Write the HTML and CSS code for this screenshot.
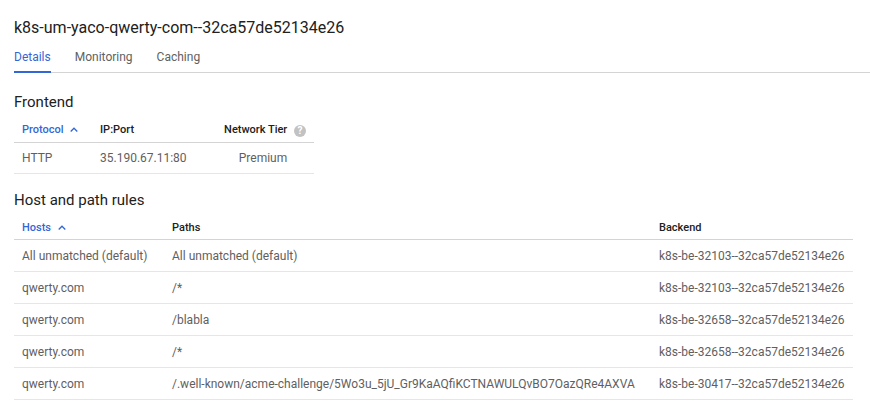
FILE: index.html
```html
<!DOCTYPE html>
<html>
<head>
<meta charset="utf-8">
<link rel="stylesheet" href="styles.css">
</head>
<body>
<div class="page">
  <h1 class="title">k8s-um-yaco-qwerty-com--32ca57de52134e26</h1>
  <nav class="tabs">
    <span class="tab active">Details</span>
    <span class="tab">Monitoring</span>
    <span class="tab">Caching</span>
  </nav>

  <h2 class="section first">Frontend</h2>
  <table class="grid frontend">
    <thead>
      <tr>
        <th class="sorted c-proto">Protocol <svg class="sort" width="8" height="5" viewBox="0 0 8 5"><path d="M0.7 4.5 L4 1.2 L7.3 4.5" fill="none" stroke="currentColor" stroke-width="1.3"/></svg></th>
        <th class="c-ip">IP:Port</th>
        <th class="c-tier">Network Tier <span class="help">?</span></th>
      </tr>
    </thead>
    <tbody>
      <tr><td>HTTP</td><td>35.190.67.11:80</td><td class="center">Premium</td></tr>
    </tbody>
  </table>

  <h2 class="section">Host and path rules</h2>
  <table class="grid hosts">
    <thead>
      <tr>
        <th class="sorted c-host">Hosts <svg class="sort" width="8" height="5" viewBox="0 0 8 5"><path d="M0.7 4.5 L4 1.2 L7.3 4.5" fill="none" stroke="currentColor" stroke-width="1.3"/></svg></th>
        <th class="c-path">Paths</th>
        <th>Backend</th>
      </tr>
    </thead>
    <tbody>
      <tr><td>All unmatched (default)</td><td>All unmatched (default)</td><td>k8s-be-32103--32ca57de52134e26</td></tr>
      <tr><td>qwerty.com</td><td>/*</td><td>k8s-be-32103--32ca57de52134e26</td></tr>
      <tr><td>qwerty.com</td><td>/blabla</td><td>k8s-be-32658--32ca57de52134e26</td></tr>
      <tr><td>qwerty.com</td><td>/*</td><td>k8s-be-32658--32ca57de52134e26</td></tr>
      <tr><td>qwerty.com</td><td>/.well-known/acme-challenge/5Wo3u_5jU_Gr9KaAQfiKCTNAWULQvBO7OazQRe4AXVA</td><td>k8s-be-30417--32ca57de52134e26</td></tr>
    </tbody>
  </table>
</div>
</body>
</html>
```

FILE: styles.css
```css
html, body {
  margin: 0;
  padding: 0;
  background: #fff;
}
body {
  font-family: Roboto, "Liberation Sans", Arial, sans-serif;
  color: #212121;
}
.page {
  padding: 0 0 0 14px;
}
.title {
  margin: 0;
  padding-top: 17px;
  font-size: 16px;
  font-weight: 400;
  line-height: 22px;
  color: #212121;
}
.tabs {
  display: flex;
  gap: 24px;
  margin-top: 10px;
  border-bottom: 1px solid #d4d4d4;
}
.tab {
  font-size: 12px;
  line-height: 16px;
  padding: 0 0 6px;
  color: #616161;
  border-bottom: 2px solid transparent;
  margin-bottom: -1px;
}
.tab.active {
  color: #3367d6;
  border-bottom-color: #3367d6;
}
.section {
  margin: 16px 0 5px;
  font-size: 15px;
  font-weight: 400;
  line-height: 20px;
  color: #212121;
}
.section.first {
  margin-top: 19px;
}
.grid {
  border-collapse: collapse;
  font-size: 12px;
}
.grid th {
  font-size: 11px;
  font-weight: 500;
  color: #212121;
  text-align: left;
  height: 25px;
  padding: 0 8px;
  border-bottom: 1px solid #d4d4d4;
  white-space: nowrap;
}
.grid th.sorted {
  color: #3367d6;
}
.sort {
  margin-left: 4px;
  vertical-align: 1px;
}
.grid td {
  height: 31px;
  padding: 0 8px;
  color: #5f5f5f;
  border-bottom: 1px solid #e6e6e6;
  white-space: nowrap;
}
.frontend {
  width: 300px;
}
.frontend td {
  height: 30px;
}
.frontend .c-proto { width: 62px; }
.frontend .c-ip { width: 108px; }
.frontend .c-tier { text-align: right; }
.grid td.center { text-align: center; padding-left: 4px; }
.help {
  display: inline-block;
  width: 12px;
  height: 12px;
  border-radius: 50%;
  background: #c2c2c2;
  color: #fff;
  font-size: 10px;
  font-weight: 700;
  line-height: 12px;
  text-align: center;
  margin-left: 4px;
  vertical-align: -1px;
}
.hosts {
  width: 839px;
  margin-bottom: 10px;
}
.hosts th {
  height: 24px;
}
.hosts .c-host { width: 134px; }
.hosts .c-path { width: 471px; }
```
